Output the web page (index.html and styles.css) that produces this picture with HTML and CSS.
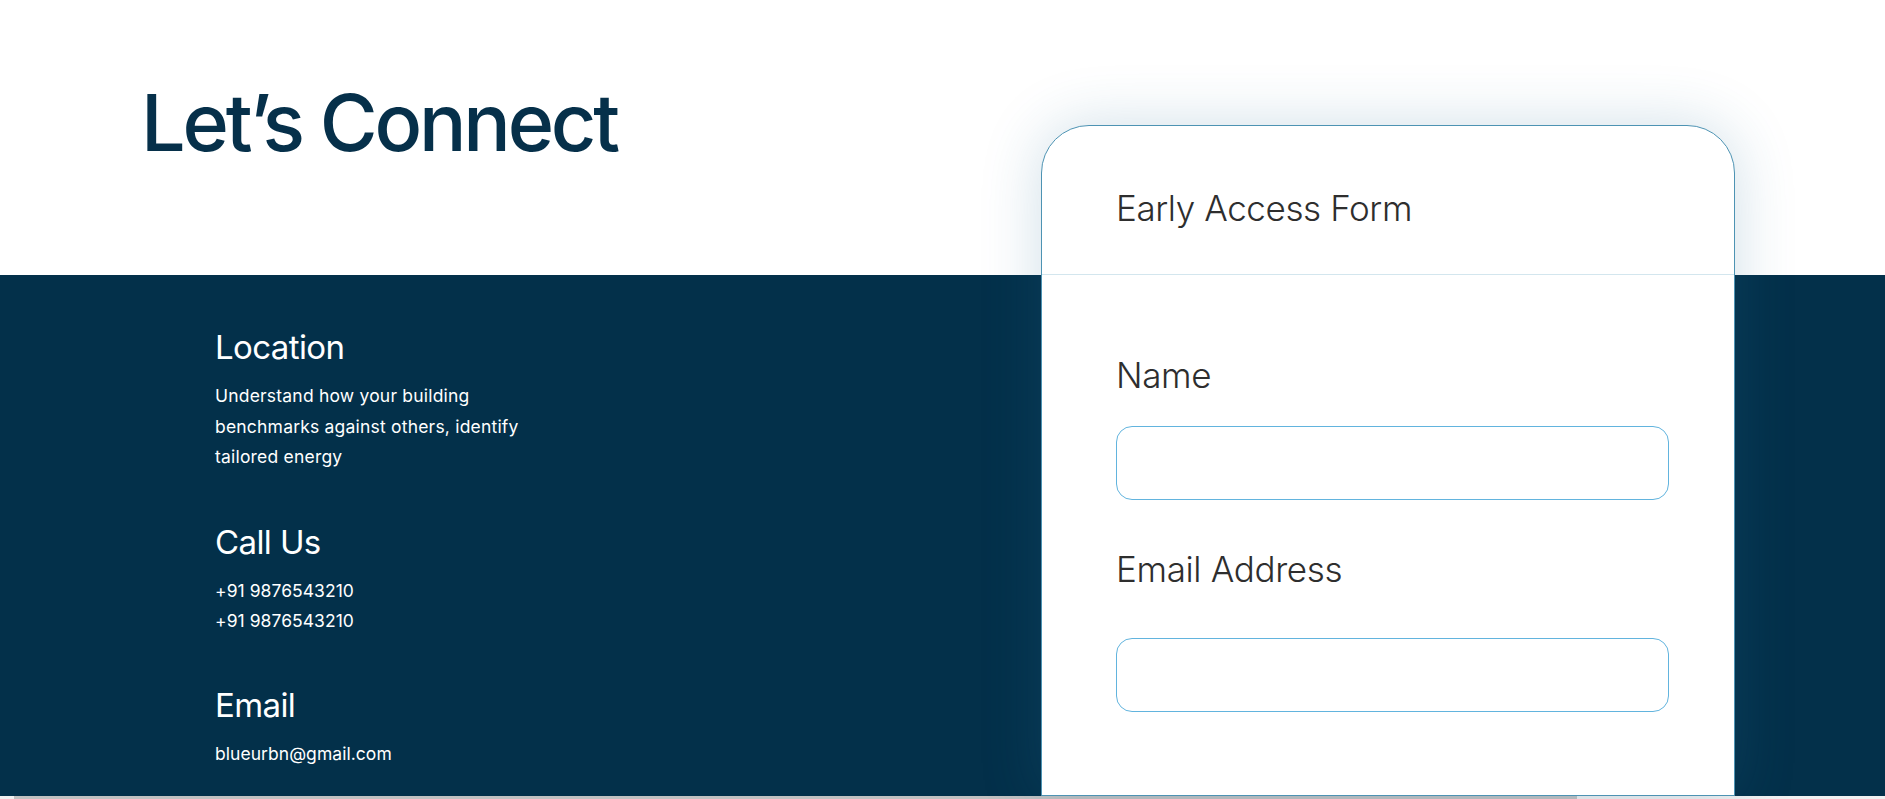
FILE: index.html
```html
<!DOCTYPE html>
<html lang="en">
<head>
<meta charset="utf-8">
<title>Let's Connect</title>
<link rel="stylesheet" href="styles.css">
</head>
<body>
<main class="page">
  <div class="left">
    <header class="hero">
      <h1 class="hero-title">Let’s Connect</h1>
    </header>
    <section class="contact">
      <div class="contact-item">
        <h2 class="contact-heading">Location</h2>
        <p class="contact-text contact-text--para">Understand how your building benchmarks against others, identify tailored energy</p>
      </div>
      <div class="contact-item">
        <h2 class="contact-heading">Call Us</h2>
        <p class="contact-text">+91 9876543210</p>
        <p class="contact-text">+91 9876543210</p>
      </div>
      <div class="contact-item">
        <h2 class="contact-heading">Email</h2>
        <p class="contact-text">blueurbn@gmail.com</p>
      </div>
    </section>
  </div>
  <div class="right">
    <form class="card">
      <div class="card-head">
        <h2 class="card-title">Early Access Form</h2>
      </div>
      <div class="card-body">
        <label class="field">
          <span class="field-label">Name</span>
          <input class="field-input" type="text">
        </label>
        <label class="field field--email">
          <span class="field-label">Email Address</span>
          <input class="field-input" type="email">
        </label>
      </div>
    </form>
  </div>
</main>
<div class="hscroll"><div class="hscroll-thumb"></div></div>
</body>
</html>
```

FILE: styles.css
```css
* { box-sizing: border-box; }
html, body { margin: 0; padding: 0; }
body {
  width: 1885px;
  height: 799px;
  overflow: hidden;
  font-family: "Inter", "Liberation Sans", sans-serif;
  background: #ffffff;
}
.page {
  height: 796px;
  display: flex;
  background: linear-gradient(to bottom, #ffffff 0, #ffffff 275px, #03304a 275px, #03304a 100%);
}
.left {
  width: 1041px;
  display: flex;
  flex-direction: column;
}
.hero {
  height: 275px;
  padding-left: 141px;
  padding-top: 82px;
}
.hero-title {
  margin: 0;
  font-size: 79px;
  line-height: 80px;
  font-weight: 500;
  letter-spacing: -3.2px;
  color: #06304a;
}
.contact {
  padding-left: 215px;
  padding-top: 52px;
  display: flex;
  flex-direction: column;
  gap: 49px;
}
.contact-heading {
  margin: 0 0 14px;
  font-size: 33px;
  line-height: 40px;
  font-weight: 400;
  letter-spacing: -0.6px;
  color: #ffffff;
}
.contact-text {
  margin: 0;
  font-size: 17.5px;
  line-height: 30px;
  font-weight: 400;
  letter-spacing: 0.05px;
  color: #ffffff;
}
.contact-text--para {
  width: 330px;
  line-height: 30.5px;
  letter-spacing: 0.2px;
}
.right {
  width: 694px;
  padding-top: 125px;
}
.card {
  height: 100%;
  background: #ffffff;
  border: 1px solid #4d93b3;
  border-radius: 48px 48px 0 0;
  box-shadow: 0 0 60px rgba(40, 110, 150, 0.22);
}
.card-head {
  height: 149px;
  border-bottom: 1px solid #d3e6ee;
  padding-left: 74px;
  padding-top: 60px;
}
.card-title {
  margin: 0;
  font-size: 35px;
  line-height: 44px;
  font-weight: 300;
  letter-spacing: -0.4px;
  color: #2e2e2e;
}
.card-body {
  padding: 78px 52px 0 74px;
  display: flex;
  flex-direction: column;
  gap: 47px;
}
.field {
  display: flex;
  flex-direction: column;
  gap: 29px;
}
.field--email { gap: 47px; }
.field-label {
  font-size: 35px;
  line-height: 44px;
  font-weight: 300;
  letter-spacing: -0.35px;
  color: #2e2e2e;
}
.field-input {
  width: 553px;
  height: 74px;
  border: 1px solid #62b4de;
  border-radius: 16px;
  background: #ffffff;
  outline: none;
  font: inherit;
}
.hscroll {
  height: 3px;
  background: #f1f1f1;
  padding-left: 14px;
}
.hscroll-thumb {
  width: 1563px;
  height: 3px;
  background: #c1c1c1;
}
```
